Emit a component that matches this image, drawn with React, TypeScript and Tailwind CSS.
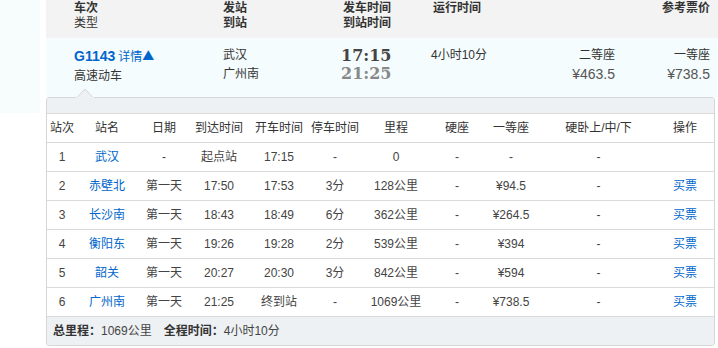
import React from 'react';

interface Stop {
  no: string;
  name: string;
  date: string;
  arrive: string;
  depart: string;
  stay: string;
  km: string;
  hard: string;
  first: string;
  sleeper: string;
  buy: boolean;
}

const stops: Stop[] = [
  { no: '1', name: '武汉', date: '-', arrive: '起点站', depart: '17:15', stay: '-', km: '0', hard: '-', first: '-', sleeper: '-', buy: false },
  { no: '2', name: '赤壁北', date: '第一天', arrive: '17:50', depart: '17:53', stay: '3分', km: '128公里', hard: '-', first: '¥94.5', sleeper: '-', buy: true },
  { no: '3', name: '长沙南', date: '第一天', arrive: '18:43', depart: '18:49', stay: '6分', km: '362公里', hard: '-', first: '¥264.5', sleeper: '-', buy: true },
  { no: '4', name: '衡阳东', date: '第一天', arrive: '19:26', depart: '19:28', stay: '2分', km: '539公里', hard: '-', first: '¥394', sleeper: '-', buy: true },
  { no: '5', name: '韶关', date: '第一天', arrive: '20:27', depart: '20:30', stay: '3分', km: '842公里', hard: '-', first: '¥594', sleeper: '-', buy: true },
  { no: '6', name: '广州南', date: '第一天', arrive: '21:25', depart: '终到站', stay: '-', km: '1069公里', hard: '-', first: '¥738.5', sleeper: '-', buy: true },
];

const headers = ['站次', '站名', '日期', '到达时间', '开车时间', '停车时间', '里程', '硬座', '一等座', '硬卧上/中/下', '操作'];

const cols = 'grid grid-cols-[30px_60px_54px_56px_64px_48px_74px_48px_60px_115px_58px] items-center text-center';

const App: React.FC = () => {
  return (
    <div className="flex w-[718px] h-[348px] bg-white text-[12px] text-[#333] font-['Liberation_Sans','Noto_Sans_CJK_SC',sans-serif]">
      {/* left strip */}
      <div className="w-[40px] h-[113px] bg-[#f7fcfd]" />

      <div className="ml-[6px] flex-1 flex flex-col">
        {/* column titles */}
        <div className="h-[38px] bg-[#f3f3f3] pl-[28px] pr-[8px] pt-[1px] grid grid-cols-[149px_120px_90px_102px_80px_95px] leading-[15px]">
          <div>
            <div className="font-bold">车次</div>
            <div>类型</div>
          </div>
          <div className="font-bold">
            <div>发站</div>
            <div>到站</div>
          </div>
          <div className="font-bold">
            <div>发车时间</div>
            <div>到站时间</div>
          </div>
          <div className="font-bold">运行时间</div>
          <div />
          <div className="font-bold text-right">参考票价</div>
        </div>

        {/* train summary */}
        <div className="relative h-[59px] bg-[#f5fcfd] pl-[28px] pr-[8px] pt-[8px] grid grid-cols-[149px_120px_90px_102px_80px_95px] leading-[19px]">
          <div>
            <div className="text-[#0066cc]">
              <span className="text-[14px] font-bold font-['Liberation_Sans',sans-serif]">G1143</span>
              <span className="ml-[3px]">详情</span>
              <span className="font-['Noto_Sans_CJK_SC',sans-serif] text-[12px]">▲</span>
            </div>
            <div>高速动车</div>
          </div>
          <div>
            <div>武汉</div>
            <div>广州南</div>
          </div>
          <div className="font-['DejaVu_Serif',serif] font-bold text-[16px] leading-[18px] pt-[1px] -ml-[2px]">
            <div className="text-[#444]">17:15</div>
            <div className="text-[#888]">21:25</div>
          </div>
          <div className="-ml-[2px]">4小时10分</div>
          <div className="text-right">
            <div>二等座</div>
            <div className="text-[14px] text-[#555]">¥463.5</div>
          </div>
          <div className="text-right">
            <div>一等座</div>
            <div className="text-[14px] text-[#555]">¥738.5</div>
          </div>

          {/* caret pointing up to the train */}
          <svg className="absolute left-[30px] bottom-[-1px]" width="18" height="10" viewBox="0 0 18 10">
            <polygon points="0.5,10 9,1 17.5,10" fill="#eef1f4" stroke="#d6d6d6" strokeWidth="1" />
            <rect x="0" y="9" width="18" height="1" fill="#eef1f4" />
          </svg>
        </div>

        {/* stop list panel */}
        <div className="w-[669px] border border-[#d6d6d6] rounded-[3px] overflow-hidden">
          <div className="h-[16px] bg-[#eef1f4] border-b border-[#dadada]" />
          <div className={`${cols} h-[29px] border-b border-[#dadada] text-[#333]`}>
            {headers.map((h) => (
              <div key={h}>{h}</div>
            ))}
          </div>
          {stops.map((s) => (
            <div key={s.no} className={`${cols} h-[29px] border-b border-[#dadada] text-[#444]`}>
              <div>{s.no}</div>
              <div className="text-[#0066cc]">{s.name}</div>
              <div>{s.date}</div>
              <div>{s.arrive}</div>
              <div>{s.depart}</div>
              <div>{s.stay}</div>
              <div>{s.km}</div>
              <div>{s.hard}</div>
              <div>{s.first}</div>
              <div>{s.sleeper}</div>
              <div className="text-[#0066cc]">{s.buy ? '买票' : ''}</div>
            </div>
          ))}
          <div className="h-[28px] bg-[#eef1f4] flex items-center pl-[6px] text-[#333]">
            <span className="font-bold">总里程：</span>
            <span className="text-[#444]">1069公里</span>
            <span className="font-bold ml-[12px]">全程时间：</span>
            <span className="text-[#444]">4小时10分</span>
          </div>
        </div>
      </div>
    </div>
  );
};

export default App;
